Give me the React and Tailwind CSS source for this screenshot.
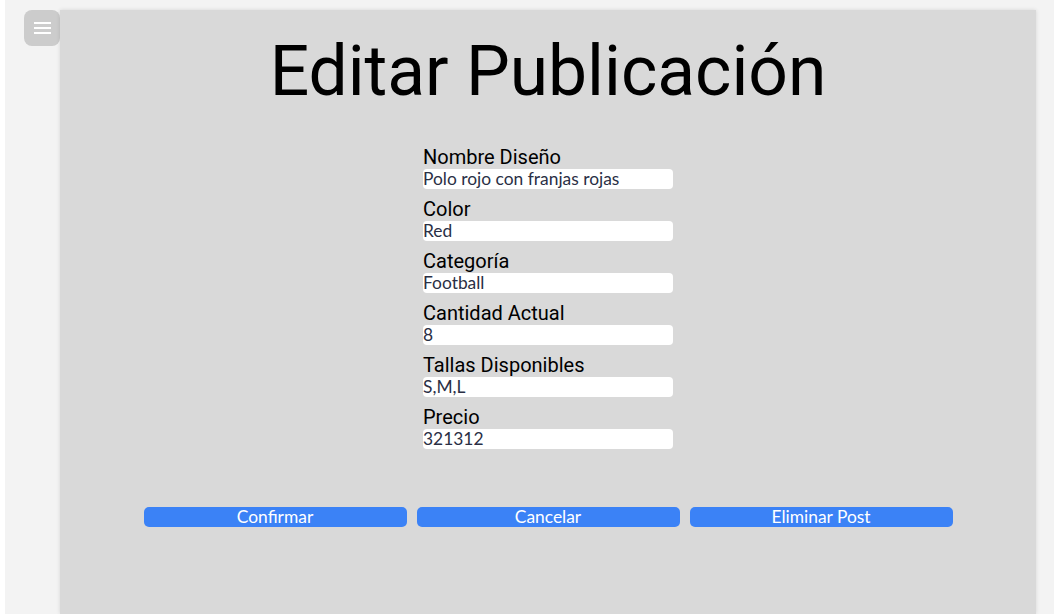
import React from "react";

const fields = [
  ["Nombre Diseño", "Polo rojo con franjas rojas"],
  ["Color", "Red"],
  ["Categoría", "Football"],
  ["Cantidad Actual", "8"],
  ["Tallas Disponibles", "S,M,L"],
  ["Precio", "321312"],
];

export default function App() {
  return (
    <div className="min-h-screen bg-white px-[5px]">
      <div className="flex min-h-[614px] bg-[#f3f3f3] pt-[10px]">
        <div className="w-[55px] shrink-0 pl-[19px]">
          <button className="flex h-[36px] w-[36px] flex-col items-center justify-center gap-[3px] rounded-[8px] bg-[#cccccc]">
            <span className="block h-[2px] w-[17px] bg-white" />
            <span className="block h-[2px] w-[17px] bg-white" />
            <span className="block h-[2px] w-[17px] bg-white" />
          </button>
        </div>
        <div className="flex w-[976px] shrink-0 flex-col items-center bg-[#d9d9d9] pt-[20px] shadow-[0_0_4px_rgba(0,0,0,0.12)]">
          <h1
            className="text-[69.5px] font-normal leading-[84px] text-black"
            style={{ fontFamily: "Roboto, sans-serif" }}
          >
            Editar Publicación
          </h1>
          <div className="mt-[32px] flex w-[250px] flex-col gap-[9px]">
            {fields.map(([label, value]) => (
              <div key={label} className="flex flex-col">
                <label
                  className="text-[20px] leading-[23px] text-black"
                  style={{ fontFamily: "Roboto, sans-serif" }}
                >
                  {label}
                </label>
                <input
                  readOnly
                  value={value}
                  className="h-[20px] w-[250px] rounded-[4px] bg-white px-0 text-[17.4px] leading-[20px] text-[#2a2f45] outline-none"
                  style={{ fontFamily: "Lato, sans-serif" }}
                />
              </div>
            ))}
          </div>
          <div className="mt-[58px] flex gap-[10px]">
            {["Confirmar", "Cancelar", "Eliminar Post"].map((t) => (
              <button
                key={t}
                className="h-[20px] w-[263px] rounded-[5px] bg-[#3b82f6] text-[17.4px] leading-[20px] text-white"
                style={{ fontFamily: "Lato, sans-serif" }}
              >
                {t}
              </button>
            ))}
          </div>
        </div>
      </div>
    </div>
  );
}
